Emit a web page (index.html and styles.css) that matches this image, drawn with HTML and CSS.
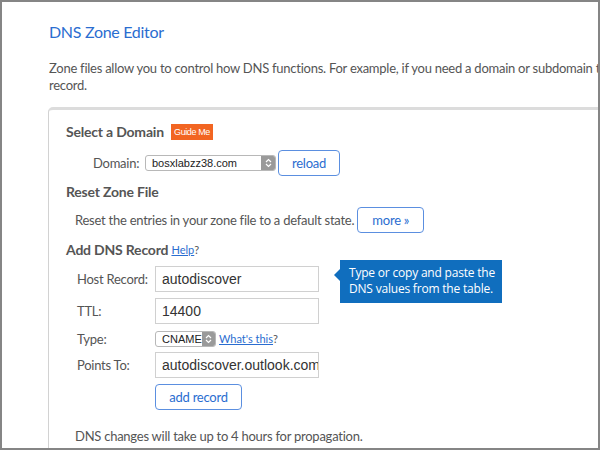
FILE: index.html
```html
<!DOCTYPE html>
<html>
<head>
<meta charset="utf-8">
<link rel="stylesheet" href="styles.css">
</head>
<body>
<div class="frame">
  <h1 class="title">DNS Zone Editor</h1>
  <p class="intro"><span class="line">Zone files allow you to control how DNS functions. For example, if you need a domain or subdomain to point to a different server, you can add a</span><br>record.</p>
  <div class="panel">
    <div class="heading">Select a Domain <span class="guide">Guide Me</span></div>
    <div class="domain-row">
      <span class="domain-label">Domain:</span>
      <span class="select select-domain"><span class="select-text">bosxlabzz38.com</span><span class="select-arrow"><svg width="7" height="10" viewBox="0 0 7 10"><path d="M1 4 L3.5 1.5 L6 4 M1 6 L3.5 8.5 L6 6" fill="none" stroke="#fff" stroke-width="1.2"/></svg></span></span>
      <span class="btn btn-reload">reload</span>
    </div>
    <div class="heading heading-reset">Reset Zone File</div>
    <div class="reset-row">
      <span class="reset-text">Reset the entries in your zone file to a default state.</span>
      <span class="btn btn-more">more »</span>
    </div>
    <div class="heading heading-add">Add DNS Record <a class="help">Help</a><span class="q">?</span></div>
    <div class="form">
      <span class="label">Host Record:</span>
      <span class="input">autodiscover</span>
      <span class="label">TTL:</span>
      <span class="input">14400</span>
      <span class="label">Type:</span>
      <span class="type-cell"><span class="select select-type"><span class="select-text">CNAME</span><span class="select-arrow"><svg width="7" height="10" viewBox="0 0 7 10"><path d="M1 4 L3.5 1.5 L6 4 M1 6 L3.5 8.5 L6 6" fill="none" stroke="#fff" stroke-width="1.2"/></svg></span></span><a class="whats">What's this</a><span class="q">?</span></span>
      <span class="label">Points To:</span>
      <span class="input">autodiscover.outlook.com</span>
      <span></span>
      <span class="btn btn-add">add record</span>
    </div>
    <p class="note">DNS changes will take up to 4 hours for propagation.</p>
  </div>
  <div class="tip">Type or copy and paste the<br>DNS values from the table.</div>
</div>
</body>
</html>
```
FILE: styles.css
```css
html, body { margin: 0; padding: 0; background: #fff; }
.frame {
  position: relative;
  width: 600px; height: 450px;
  box-sizing: border-box;
  border: 2px solid #858585;
  overflow: hidden;
  padding-left: 46px;
  font-family: Lato, "Open Sans", sans-serif;
  color: #555;
}
.title {
  margin: 20px 0 0 1px;
  font-size: 16px; line-height: 20px; font-weight: normal;
  letter-spacing: -0.3px;
  color: #2a6dd0;
}
.intro {
  margin: 18px 0 0 1px;
  width: 900px;
  font-size: 13px; line-height: 17px;
  letter-spacing: -0.25px;
  color: #555;
}
.line { white-space: nowrap; }
.panel {
  margin-top: 13px;
  width: 640px;
  border: 1px solid #d2d2d2;
  border-top: 3px solid #dcdcdc;
  border-radius: 5px 0 0 0;
  padding: 12px 0 40px 17px;
  box-sizing: border-box;
  font-size: 13px; letter-spacing: -0.25px;
}
.heading {
  font-size: 14px; line-height: 20px; font-weight: bold; color: #555;
  letter-spacing: -0.2px;
  display: flex; align-items: center; white-space: pre;
}
.guide {
  margin-left: 4px;
  background: #f26522; color: #fff;
  font-size: 9px; line-height: 16px; font-weight: normal;
  font-family: "Liberation Sans", Arial, sans-serif;
  padding: 0 3px; letter-spacing: -0.4px;
}
.domain-row {
  margin-top: 8px; padding-left: 27px;
  display: flex; align-items: center; height: 26px;
}
.domain-label { width: 52px; }
.select {
  display: inline-flex; align-items: stretch;
  border: 1px solid #b8b8b8; border-radius: 3px;
  height: 16px; box-sizing: border-box;
  font-family: "Liberation Sans", Arial, sans-serif;
  font-size: 11px; color: #222; letter-spacing: 0;
  background: #fff;
}
.select-text { flex: 1; padding-left: 6px; line-height: 14px; }
.select-arrow {
  width: 14px; background: #9a9a9a;
  display: flex; align-items: center; justify-content: center;
  border-radius: 0 2px 2px 0;
}
.select-domain { width: 131px; }
.btn {
  display: inline-flex; align-items: center; justify-content: center;
  height: 26px; box-sizing: border-box;
  border: 1px solid #5b8fe0; border-radius: 4px;
  color: #2a6dd0; font-size: 13px; background: #fff;
}
.btn-reload { width: 62px; margin-left: 2px; }
.heading-reset { margin-top: 6px; }
.reset-row {
  margin-top: 5px; padding-left: 9px;
  display: flex; align-items: center; height: 26px;
}
.btn-more { width: 67px; margin-left: 3px; }
.heading-add { margin-top: 7px; }
.help { margin-left: 0; font-size: 11px; font-weight: normal; color: #2a6dd0; text-decoration: underline; letter-spacing: 0; }
.q { font-size: 11px; font-weight: normal; color: #555; letter-spacing: 0; }
.form {
  margin-top: 6px; padding-left: 11px;
  display: grid;
  grid-template-columns: 78px 164px;
  grid-template-rows: 26px 26px 16px 26px 26px;
  row-gap: 6px;
  align-items: center;
}
.label { white-space: nowrap; }
.form > :nth-child(5), .form > :nth-child(6) { margin-top: 1px; }
.input {
  height: 26px; box-sizing: border-box;
  border: 1px solid #d0d0d0;
  padding: 0 6px;
  display: flex; align-items: center;
  font-family: "Liberation Sans", Arial, sans-serif;
  font-size: 14px; color: #333; letter-spacing: 0;
  white-space: nowrap; overflow: hidden;
}
.type-cell { display: flex; align-items: center; white-space: nowrap; }
.select-type { width: 61px; }
.whats { margin-left: 3px; font-size: 11px; color: #2a6dd0; text-decoration: underline; letter-spacing: 0; }
.btn-add { width: 87px; margin-top: -1px; }
.note { margin: 16px 0 0 9px; line-height: 20px; }
.tip {
  position: absolute; left: 338px; top: 258px;
  width: 162px; box-sizing: border-box;
  background: #106ebe; color: #fff;
  padding: 5px 0 6px 9px;
  font-family: "Open Sans", "Noto Sans", sans-serif;
  font-size: 12px; line-height: 16px; letter-spacing: -0.2px;
  white-space: nowrap;
}
.tip::before {
  content: ""; position: absolute; left: -6px; top: 9px;
  border-top: 6px solid transparent; border-bottom: 6px solid transparent;
  border-right: 6px solid #106ebe;
}
```
